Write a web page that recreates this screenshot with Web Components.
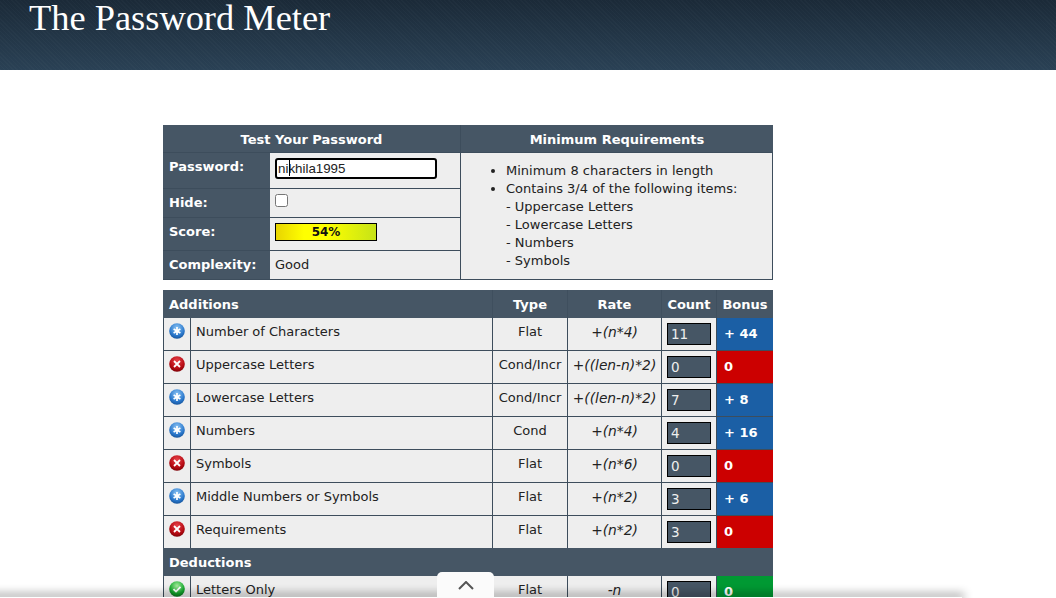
<!DOCTYPE html>
<html>
<head>
<meta charset="utf-8">
<title>The Password Meter</title>
<style>
html, body { margin: 0; height: 598px; overflow: hidden; background: #fff; }
body { font: 13px "DejaVu Sans", Verdana, sans-serif; color: #222; }
pm-test-panel { margin: 55px 0 10px 163px; }
pm-score-table { margin-left: 163px; }
</style>
</head>
<body>

<pm-header>The Password Meter</pm-header>

<pm-test-panel>
    <pm-field label="Password:" height="35"><pm-password value="nikhila1995"></pm-password></pm-field>
    <pm-field label="Hide:" height="28"><input type="checkbox"></pm-field>
    <pm-field label="Score:" height="32"><pm-score-bar>54%</pm-score-bar></pm-field>
    <pm-field label="Complexity:" height="28">Good</pm-field>
</pm-test-panel>

<pm-score-table id="scores"></pm-score-table>

<pm-drawer></pm-drawer>

<script>
class PmHeader extends HTMLElement {
    constructor() {
        super()
        this.attachShadow({ mode: "open" })
        this.shadowRoot.innerHTML = `
            <style>
            :host {
                display: block;
                height: 70px;
                padding-left: 29px;
                box-sizing: border-box;
                color: #fff;
                font: 36.4px/37px "Liberation Serif", Georgia, serif;
                background:
                    repeating-linear-gradient(45deg, rgba(255,255,255,.018) 0 1px, transparent 1px 3px),
                    linear-gradient(#1b2a38, #2a4155);
            }
            </style>
            <slot></slot>
        `
    }
}

class PmTestPanel extends HTMLElement {
    constructor() {
        super()
        this.attachShadow({ mode: "open" })
        this.shadowRoot.innerHTML = `
            <style>
            :host {
                display: grid;
                grid-template-columns: 297px 312px;
                grid-template-rows: 27px auto;
                gap: 0 1px;
                width: 610px;
                background: #3d4d5c;
            }
            .head {
                background: #465665;
                color: #fff;
                font-weight: 700;
                text-align: center;
                line-height: 29px;
            }
            .rows { display: flex; flex-direction: column; gap: 1px; padding: 1px 0; }
            .reqs {
                margin: 1px 1px 1px 0;
                background: #eee;
                line-height: 18px;
                padding: 9px 0 0 45px;
            }
            ul { margin: 0; padding: 0; }
            </style>
            <div class="head">Test Your Password</div>
            <div class="head">Minimum Requirements</div>
            <div class="rows"><slot></slot></div>
            <div class="reqs">
                <ul>
                    <li>Minimum 8 characters in length</li>
                    <li>Contains 3/4 of the following items:</li>
                </ul>
                <div>- Uppercase Letters</div>
                <div>- Lowercase Letters</div>
                <div>- Numbers</div>
                <div>- Symbols</div>
            </div>
        `
    }
}

class PmField extends HTMLElement {
    constructor() {
        super()
        this.attachShadow({ mode: "open" })
        this.shadowRoot.innerHTML = `
            <style>
            :host {
                display: grid;
                grid-template-columns: 107px 190px;
                background: #465665;
            }
            .label {
                color: #fff;
                font-weight: 700;
                padding-left: 6px;
                padding-top: 6px;
            }
            .value {
                background: #eee;
                padding: 5px 0 0 5px;
                line-height: 17px;
            }
            ::slotted(input) { display: block; margin: 0; width: 13px; height: 13px; }
            </style>
            <div class="label"></div>
            <div class="value"><slot></slot></div>
        `
    }

    connectedCallback() {
        this.shadowRoot.querySelector(".label").textContent = this.getAttribute("label")
        this.style.height = this.getAttribute("height") + "px"
    }
}

class PmPassword extends HTMLElement {
    constructor() {
        super()
        this.attachShadow({ mode: "open" })
        this.shadowRoot.innerHTML = `
            <style>
            :host {
                display: block;
                width: 162px;
                height: 21px;
                box-sizing: border-box;
                border: 2px solid #000;
                border-radius: 3px;
                background: #fff;
                color: #222;
                font: 13.33px/17px "Liberation Sans", Arial, sans-serif;
                padding-left: 1px;
            }
            .caret { position: relative; }
            .caret::after {
                content: "";
                position: absolute;
                left: 4px;
                top: -1px;
                width: 1px;
                height: 16px;
                background: #000;
            }
            </style>
            <span class="first"></span><span class="caret"></span><span class="rest"></span>
        `
    }

    connectedCallback() {
        let value = this.getAttribute("value")
        this.shadowRoot.querySelector(".first").textContent = value.slice(0, 1)
        this.shadowRoot.querySelector(".rest").textContent = value.slice(1)
    }
}

class PmScoreBar extends HTMLElement {
    constructor() {
        super()
        this.attachShadow({ mode: "open" })
        this.shadowRoot.innerHTML = `
            <style>
            :host {
                display: block;
                width: 102px;
                height: 18px;
                box-sizing: border-box;
                border: 1px solid #000;
                background: linear-gradient(90deg, #e8d400, #ffff00 28%, #ffff00 50%, #c6e317);
                font-weight: 700;
                font-size: 12px;
                line-height: 17px;
                text-align: center;
                color: #111;
            }
            </style>
            <slot></slot>
        `
    }
}

class PmStatusIcon extends HTMLElement {
    constructor() {
        super()
        this.attachShadow({ mode: "open" })
    }

    connectedCallback() {
        let kind = this.getAttribute("kind")
        let colors = {
            pass: ["#8cc4f4", "#2a78cc", "#124c90"],
            fail: ["#e8434a", "#b50a12", "#700005"],
            bonus: ["#a6ec9c", "#13a82c", "#0a6b1c"]
        }[kind]
        let marks = {
            pass: `<path d="M8 4v8M4.6 6l6.8 4M11.4 6l-6.8 4" stroke="#fff" stroke-width="1.7" fill="none"/>`,
            fail: `<path d="M5 5l6 6M11 5l-6 6" stroke="#fff" stroke-width="1.8" fill="none"/>`,
            bonus: `<path d="M4.5 8.2l2.5 2.4 4.5-4.7" stroke="#fff" stroke-width="1.8" fill="none"/>`
        }
        this.shadowRoot.innerHTML = `
            <style>
            :host { display: block; width: 16px; height: 16px; }
            svg { display: block; }
            </style>
            <svg width="16" height="16" viewBox="0 0 16 16">
                <defs>
                    <radialGradient id="ball" cx="50%" cy="30%" r="75%">
                        <stop offset="0" stop-color="${colors[0]}"/>
                        <stop offset=".65" stop-color="${colors[1]}"/>
                        <stop offset="1" stop-color="${colors[2]}"/>
                    </radialGradient>
                </defs>
                <circle cx="8" cy="8" r="7.8" fill="url(#ball)"/>
                ${marks[kind]}
            </svg>
        `
    }
}

class PmScoreTable extends HTMLElement {
    constructor() {
        super()
        this.attachShadow({ mode: "open" })
        this.shadowRoot.innerHTML = `
            <style>
            :host {
                display: block;
                width: 610px;
                background: #3d4d5c;
            }
            </style>
            <slot></slot>
        `
    }
}

class PmHeadRow extends HTMLElement {
    constructor() {
        super()
        this.attachShadow({ mode: "open" })
        this.shadowRoot.innerHTML = `
            <style>
            :host {
                display: grid;
                grid-template-columns: 329px 74px 93px 54px 56px;
                gap: 0 1px;
                height: 27px;
                background: #3f4f5e;
                color: #fff;
                font-weight: 700;
                line-height: 29px;
                text-align: center;
            }
            div { background: #465665; }
            .name { text-align: left; padding-left: 6px; }
            :host([single]) { grid-template-columns: 1fr; }
            :host([single]) div:not(.name) { display: none; }
            </style>
            <div class="name"></div>
            <div></div><div></div><div></div><div></div>
        `
    }

    connectedCallback() {
        let cells = this.shadowRoot.querySelectorAll("div")
        let texts = [this.getAttribute("name"), this.getAttribute("type"), this.getAttribute("rate"), this.getAttribute("count"), this.getAttribute("bonus")]
        cells.forEach((c, i) => c.textContent = texts[i] || "")
        if (!texts[1]) this.setAttribute("single", "")
    }
}

class PmScoreRow extends HTMLElement {
    constructor() {
        super()
        this.attachShadow({ mode: "open" })
        this.shadowRoot.innerHTML = `
            <style>
            :host {
                display: grid;
                grid-template-columns: 26px 301px 74px 93px 54px 56px;
                gap: 0 1px;
                height: 32px;
                padding: 1px 0 0 1px;
                background: #3d4d5c;
                width: 609px;
            }
            div { background: #eee; line-height: 28px; }
            .icon { display: flex; justify-content: center; padding-top: 5px; }
            .name { padding-left: 5px; }
            .type, .rate { text-align: center; }
            .rate { font-style: italic; font-size: 13.8px; }
            .count { padding: 5px 0 0 5px; }
            .count span {
                display: block;
                width: 44px;
                height: 22px;
                box-sizing: border-box;
                border: 1px solid #000;
                background: #465665;
                color: #eee;
                font-size: 13.5px;
                line-height: 21px;
                padding-left: 3px;
            }
            .bonus {
                color: #fff;
                font-weight: 700;
                padding-left: 7px;
                line-height: 31px;
            }
            .pass { background: #1b5fa5; }
            .fail { background: #cc0000; }
            .extra { background: #009933; }
            </style>
            <div class="icon"></div>
            <div class="name"></div>
            <div class="type"></div>
            <div class="rate"></div>
            <div class="count"><span></span></div>
            <div class="bonus"></div>
        `
    }

    connectedCallback() {
        let root = this.shadowRoot
        let state = this.getAttribute("state")
        let icon = document.createElement("pm-status-icon")
        icon.setAttribute("kind", state == "extra" ? "bonus" : state)
        root.querySelector(".icon").appendChild(icon)
        root.querySelector(".name").textContent = this.getAttribute("name")
        root.querySelector(".type").textContent = this.getAttribute("type")
        root.querySelector(".rate").textContent = this.getAttribute("rate")
        root.querySelector(".count span").textContent = this.getAttribute("count")
        let bonus = root.querySelector(".bonus")
        bonus.textContent = this.getAttribute("bonus")
        bonus.classList.add(state)
    }
}

class PmDrawer extends HTMLElement {
    constructor() {
        super()
        this.attachShadow({ mode: "open" })
        this.shadowRoot.innerHTML = `
            <style>
            :host {
                position: fixed;
                left: -20px;
                bottom: 0;
                width: 982px;
                height: 1px;
                background: #fff;
                box-shadow: 0 -1px 10px 2px rgba(0,0,0,.45);
            }
            .tab {
                position: absolute;
                left: 457px;
                bottom: 0;
                width: 57px;
                height: 26px;
                background: #fbfbfb;
                border-radius: 5px 5px 0 0;
                display: flex;
                justify-content: center;
                padding-top: 9px;
                box-sizing: border-box;
            }
            svg { display: block; }
            </style>
            <div class="tab">
                <svg width="16" height="9" viewBox="0 0 16 9">
                    <path d="M1 8l7-7 7 7" fill="none" stroke="#555" stroke-width="2"/>
                </svg>
            </div>
        `
    }
}

customElements.define("pm-header", PmHeader)
customElements.define("pm-test-panel", PmTestPanel)
customElements.define("pm-field", PmField)
customElements.define("pm-password", PmPassword)
customElements.define("pm-score-bar", PmScoreBar)
customElements.define("pm-status-icon", PmStatusIcon)
customElements.define("pm-score-table", PmScoreTable)
customElements.define("pm-head-row", PmHeadRow)
customElements.define("pm-score-row", PmScoreRow)
customElements.define("pm-drawer", PmDrawer)

const scores = [
    ["head", "Additions", "Type", "Rate", "Count", "Bonus"],
    ["pass", "Number of Characters", "Flat", "+(n*4)", "11", "+ 44"],
    ["fail", "Uppercase Letters", "Cond/Incr", "+((len-n)*2)", "0", "0"],
    ["pass", "Lowercase Letters", "Cond/Incr", "+((len-n)*2)", "7", "+ 8"],
    ["pass", "Numbers", "Cond", "+(n*4)", "4", "+ 16"],
    ["fail", "Symbols", "Flat", "+(n*6)", "0", "0"],
    ["pass", "Middle Numbers or Symbols", "Flat", "+(n*2)", "3", "+ 6"],
    ["fail", "Requirements", "Flat", "+(n*2)", "3", "0"],
    ["head", "Deductions"],
    ["extra", "Letters Only", "Flat", "-n", "0", "0"]
]

const table = document.getElementById("scores")
scores.forEach(s => {
    let row = document.createElement(s[0] == "head" ? "pm-head-row" : "pm-score-row")
    if (s[0] != "head") row.setAttribute("state", s[0])
    let names = ["name", "type", "rate", "count", "bonus"]
    names.forEach((n, i) => {
        if (s[i + 1]) row.setAttribute(n, s[i + 1])
    })
    table.appendChild(row)
})
</script>
</body>
</html>
